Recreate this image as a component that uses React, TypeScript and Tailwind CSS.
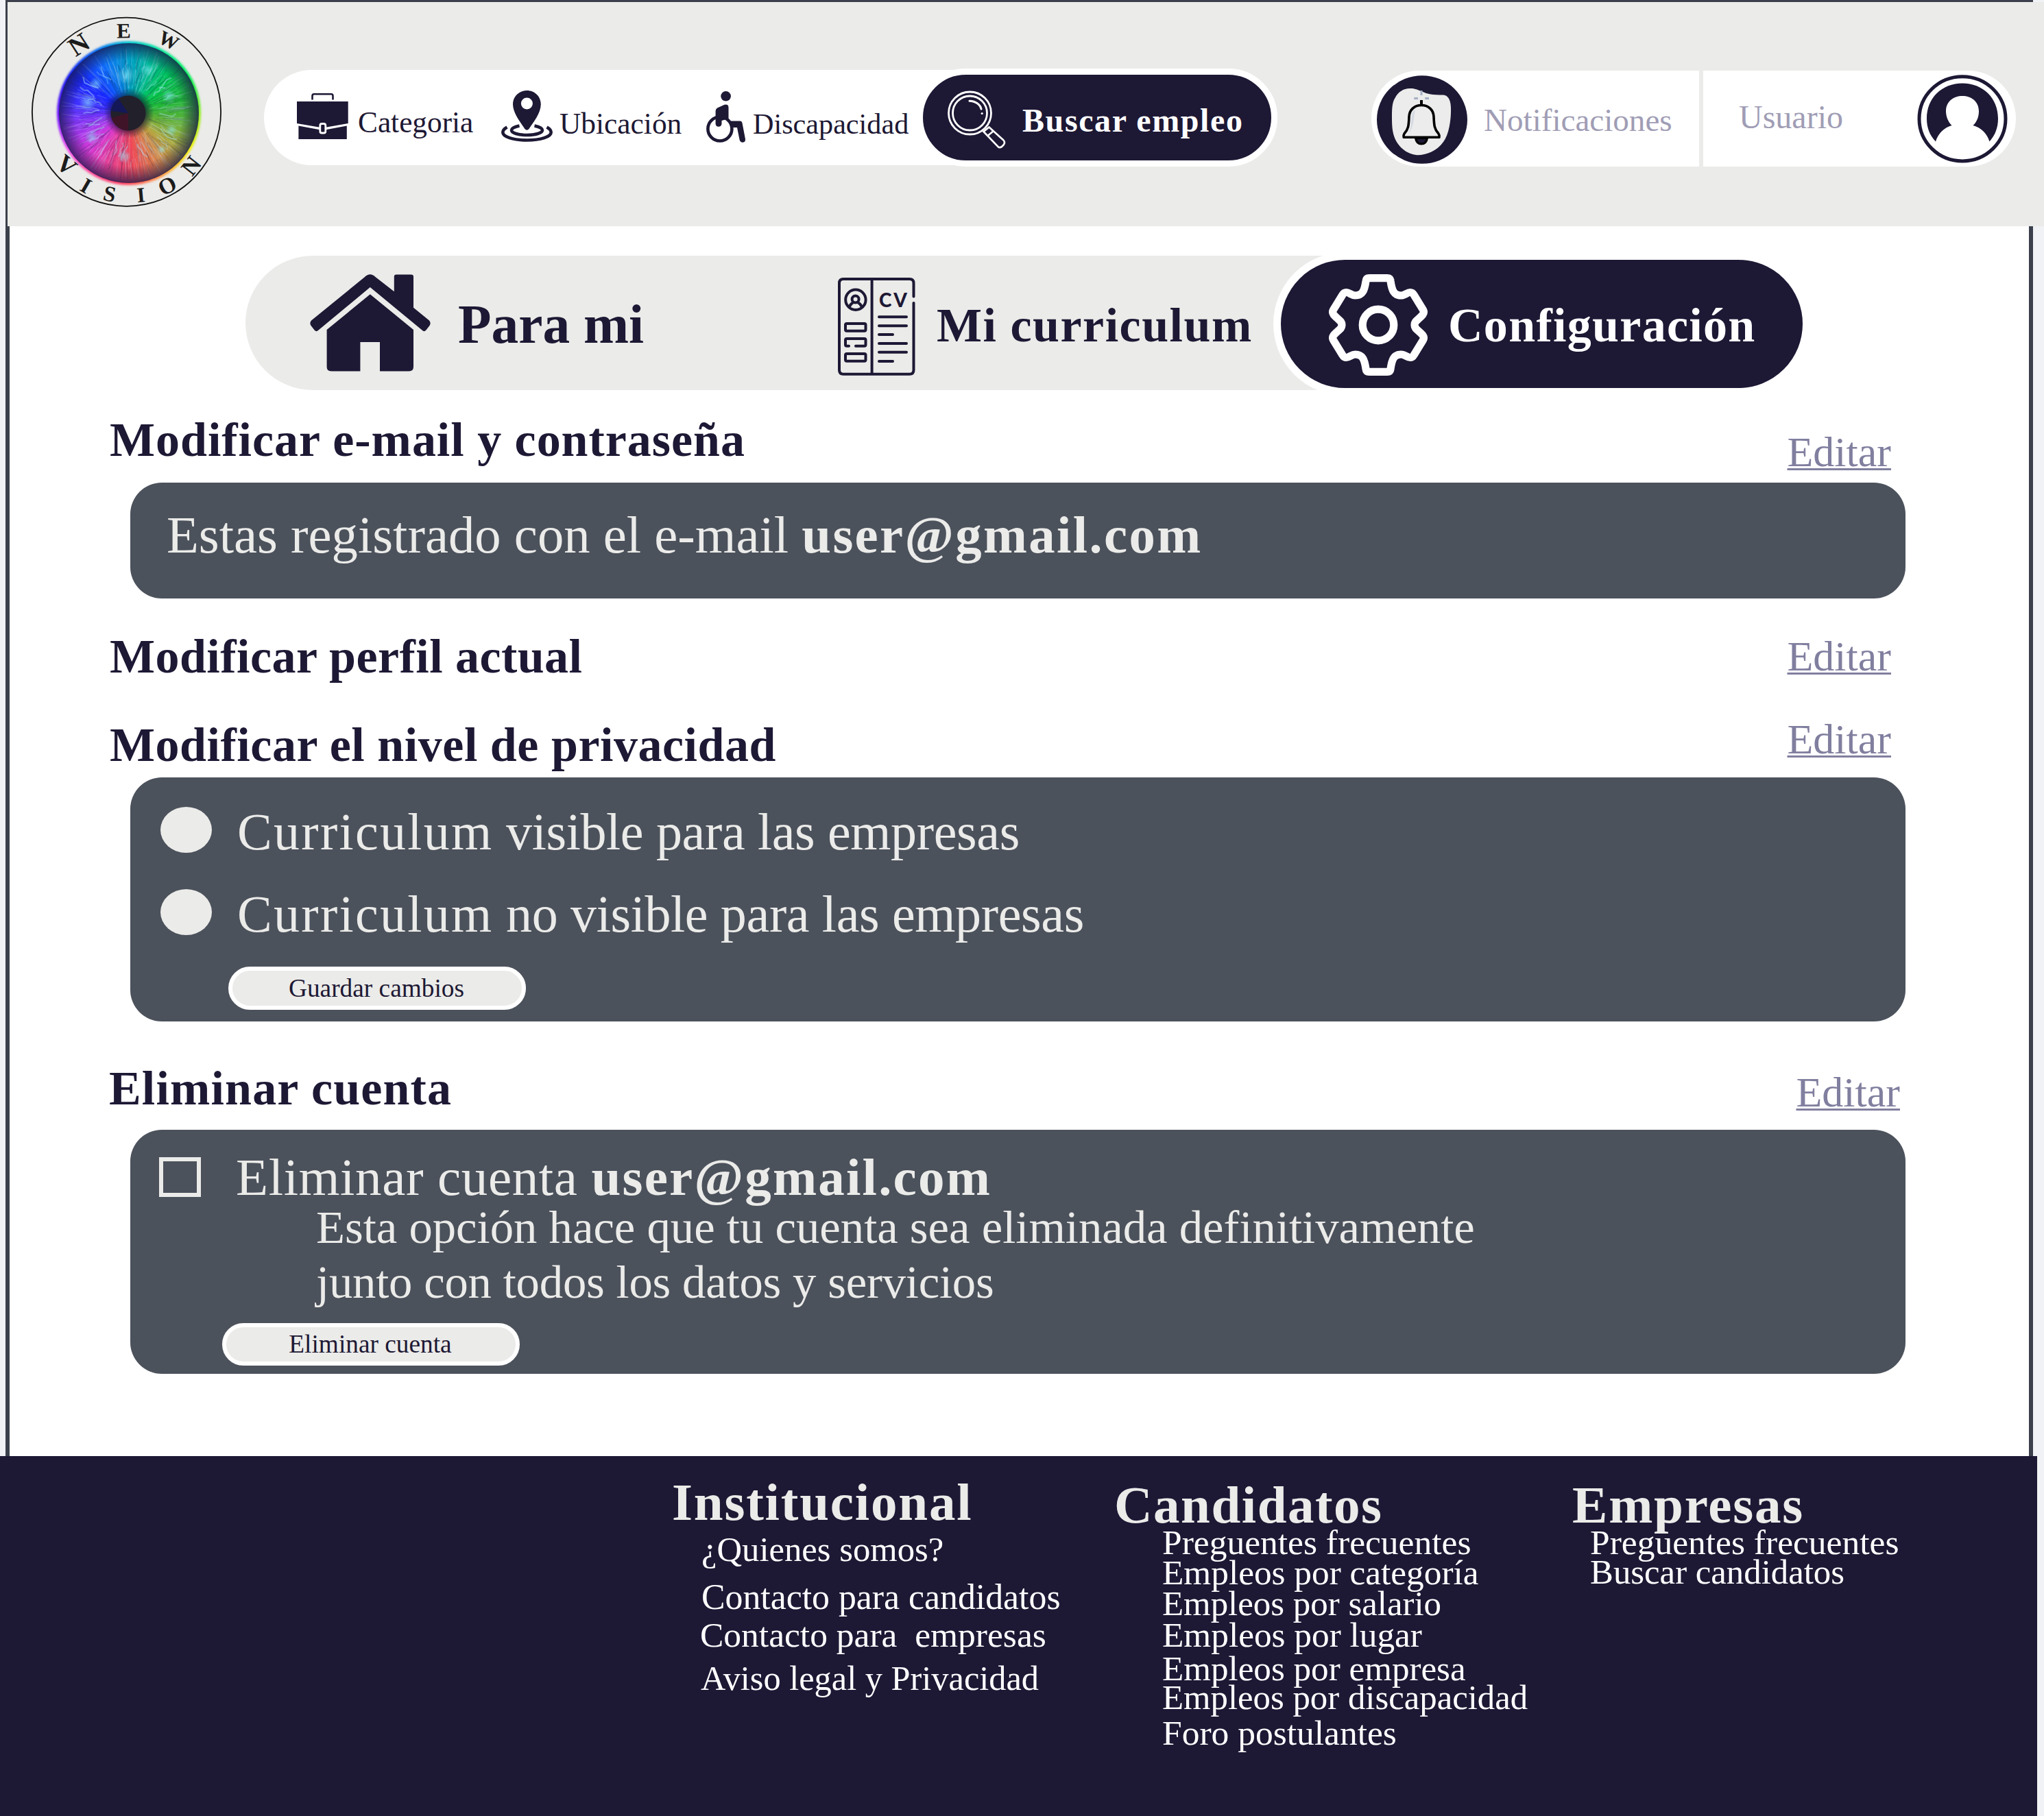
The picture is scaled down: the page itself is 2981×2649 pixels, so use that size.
import React from "react";

const NAVY = "#1d1834";

function rand(i: number) {
  const v = Math.sin(i * 127.1 + 11.7) * 43758.5453;
  return v - Math.floor(v);
}

/* Fine radial fibres of the iris */
const fibres = Array.from({ length: 520 }, (_, i) => {
  const a = rand(i) * Math.PI * 2;
  const r1 = 28 + rand(i + 500) * 45;
  const r2 = Math.min(98, r1 + 8 + rand(i + 900) * 32);
  const b = a + (rand(i + 1300) - 0.5) * 0.12;
  return {
    d: `M${188 + Math.cos(a) * r1} ${165 + Math.sin(a) * r1}L${188 + Math.cos(b) * r2} ${165 + Math.sin(b) * r2}`,
    light: rand(i + 1700) > 0.45,
    o: 0.06 + rand(i + 2100) * 0.16,
  };
});

/* Soft forked flares around the pupil */
const flares = Array.from({ length: 30 }, (_, i) => {
  const base = (i / 30) * Math.PI * 2 + rand(i + 3) * 0.15;
  let a = base;
  let r = 38 + rand(i + 31) * 20;
  let d = `M${188 + Math.cos(a) * r} ${165 + Math.sin(a) * r}`;
  for (let k = 0; k < 4; k++) {
    a += (rand(i * 7 + k) - 0.5) * 0.14;
    r += 4 + rand(i * 5 + k) * 4;
    d += `L${188 + Math.cos(a) * r} ${165 + Math.sin(a) * r}`;
  }
  return d;
});

/* Brightest spots of the iris: x, y, radius */
const glints: [number, number, number][] = [
  [184, 110, 13],
  [216, 102, 9],
  [246, 140, 10],
  [128, 150, 13],
  [140, 122, 10],
  [134, 200, 11],
  [181, 228, 10],
  [236, 218, 7],
  [250, 190, 9],
];

const logoLetters: [string, number, number, number, number][] = [
  ["N", 115, 65, -33, 39],
  ["E", 180.5, 45, -1, 31],
  ["W", 246, 59, 27, 29],
  ["V", 97, 241, 40, 36],
  ["I", 125.5, 271, 30, 32],
  ["S", 160, 283, 12, 32],
  ["I", 205.5, 284.5, -5, 31],
  ["O", 244, 271, -27, 33],
  ["N", 279, 242, -52, 34],
];

function Logo() {
  return (
    <div className="relative ml-[33px] mt-[19px] h-[282px] w-[282px] shrink-0">
      <div className="absolute left-[39px] top-[38px] h-[210px] w-[210px] rounded-full blur-[1.5px] bg-[conic-gradient(#00c8d0,#00e890_30deg,#00f050_60deg,#90f020_90deg,#f0f000_120deg,#ffa040_150deg,#ff4060_185deg,#ff50a0_215deg,#f050f0_240deg,#7010ff_268deg,#1010f0_300deg,#0070f0_335deg,#00c8d0)]" />
      <div className="absolute left-[42px] top-[41px] h-[204px] w-[204px] rounded-full bg-[conic-gradient(#00a0c8,#00b890_25deg,#00c850_50deg,#20b838_75deg,#60b038_100deg,#a8b040_122deg,#d88848_148deg,#f04858_176deg,#e84098_203deg,#d838d8_228deg,#9038f8_258deg,#4030ff_280deg,#1828ff_305deg,#1068ff_330deg,#00a0c8)]" />
      <svg className="absolute inset-0" width="282" height="282" viewBox="44 22 282 282">
        <defs>
          <radialGradient id="iris-shade" cx="188" cy="165" r="102" gradientUnits="userSpaceOnUse">
            <stop offset="0" stopColor="#101030" stopOpacity="0.8" />
            <stop offset="0.25" stopColor="#101030" stopOpacity="0.6" />
            <stop offset="0.36" stopColor="#101030" stopOpacity="0" />
            <stop offset="0.76" stopColor="#181848" stopOpacity="0" />
            <stop offset="0.94" stopColor="#181848" stopOpacity="0.55" />
            <stop offset="1" stopColor="#181848" stopOpacity="0.75" />
          </radialGradient>
          <radialGradient id="glint">
            <stop offset="0" stopColor="#90f0ff" stopOpacity="0.55" />
            <stop offset="1" stopColor="#90f0ff" stopOpacity="0" />
          </radialGradient>
        </defs>
        {fibres.map((f, i) => (
          <path key={i} d={f.d} stroke={f.light ? "#d0e8ff" : "#102050"} strokeOpacity={f.o} strokeWidth="1.3" fill="none" />
        ))}
        {glints.map(([x, y, r], i) => (
          <circle key={i} cx={x} cy={y} r={r} fill="url(#glint)" />
        ))}
        <g className="blur-[0.7px]">
          {flares.map((d, i) => (
            <path key={i} d={d} stroke="#b0e8ff" strokeOpacity={0.15 + rand(i + 77) * 0.3} strokeWidth="2" fill="none" />
          ))}
        </g>
        <circle cx="188" cy="165" r="102" fill="url(#iris-shade)" />
        <circle cx="187" cy="165" r="25.5" fill="#22202a" />
        <path d="M187 165L162 162A25 25 0 0 1 173 144Z" fill="#141858" />
        <path d="M187 165V190A25 25 0 0 1 163 172Z" fill="#401428" />
        <circle cx="184.5" cy="163.2" r="137.6" fill="none" stroke="#111" strokeWidth="1.8" />
        {logoLetters.map(([c, x, y, r, s], i) => (
          <text
            key={i}
            transform={`translate(${x} ${y}) rotate(${r})`}
            y={s * 0.33}
            textAnchor="middle"
            fontSize={s}
            fill="#1b1b1b"
            className="font-['Liberation_Serif',serif] font-bold"
          >
            {c}
          </text>
        ))}
      </svg>
    </div>
  );
}

function BriefcaseIcon() {
  return (
    <svg className="ml-12 mt-[34px] shrink-0" width="75" height="67" viewBox="0 0 75 67" fill={NAVY}>
      <path d="M22.5 9.5V4Q22.5 1.3 25 1.3H50Q52.5 1.3 52.5 4V9.5" fill="none" stroke={NAVY} strokeWidth="2.6" />
      <path d="M0 12H74.7V44L43.5 49.5H32L0 44Z" />
      <path d="M2.4 47.5L32 53H43.5L72.8 47.5V67H2.4Z" />
      <rect x="33.8" y="44.5" width="8" height="13.5" rx="2.5" stroke="#fff" strokeWidth="2.8" />
    </svg>
  );
}

function PinIcon() {
  return (
    <svg className="mt-[30px] shrink-0" width="75" height="75" viewBox="0 0 75 75">
      <path
        fillRule="evenodd"
        fill={NAVY}
        d="M37.4 0C48.5 0 57.8 8.5 57.8 20C57.8 33 47 46 40.5 56Q37.4 59.5 34.3 56C28 46 17 33 17 20C17 8.5 26.3 0 37.4 0ZM37.4 10.6A8.5 8.5 0 1 0 37.4 27.6A8.5 8.5 0 1 0 37.4 10.6Z"
      />
      <g fill="none" stroke={NAVY} strokeWidth="4.6">
        <path d="M26.5 51.5C19 53 15 55.5 15 58C15 62 25 65 37.4 65S60 62 60 58C60 55.5 56 53 48.5 51.5" />
        <path d="M8.5 53.5C4 56 2.3 58.5 2.3 61C2.3 67.5 17 72.5 37.4 72.5S72.700 67.500 72.700 61C72.700 58.500 71 56 66.500 53.500" />
      </g>
    </svg>
  );
}

function WheelchairIcon() {
  return (
    <svg className="mt-[31px] shrink-0" width="58" height="75" viewBox="0 0 58 75">
      <circle cx="28.6" cy="7.3" r="7.3" fill={NAVY} />
      <circle cx="19.9" cy="55" r="17.5" fill="none" stroke={NAVY} strokeWidth="4.6" />
      <path d="M13.6 29Q13.6 26 16 24.5L26.5 19.8Q32.5 18.5 32.5 24V40L22.5 43V47Q22.5 51.7 18 51.7T13.6 47Z" fill={NAVY} />
      <path d="M35 43.5H49Q52 43.5 52.5 46.5L57 70Q57.2 74.5 53.3 74.7Q49.5 74.7 48.6 71L45 53H38Z" fill={NAVY} />
    </svg>
  );
}

function MagnifierIcon() {
  return (
    <svg className="ml-9 mt-[23px] shrink-0" width="85" height="85" viewBox="0 0 85 85" fill="none" stroke="#fff">
      <circle cx="32.5" cy="33" r="31" strokeWidth="2.8" />
      <circle cx="32.5" cy="33" r="25" strokeWidth="2.8" />
      <path d="M32 15.2C41 15.5 47.5 20.5 49 27" strokeWidth="3" strokeLinecap="round" />
      <circle cx="50.2" cy="33.5" r="1.6" fill="#fff" stroke="none" />
      <path d="M52.5 60L60.5 53.5L81.5 72.5Q84.5 76 81.5 79.5L79.5 81.5Q77 84 74 82.5Z" strokeWidth="2.6" />
      <path d="M58.5 66L67 59" strokeWidth="2.6" />
    </svg>
  );
}

function BellIcon() {
  return (
    <svg className="ml-2 mt-[7px] shrink-0" width="132" height="129" viewBox="0 0 132 129">
      <ellipse cx="66" cy="64.5" rx="66" ry="64.3" fill={NAVY} />
      <path
        d="M47.8 19C56 18.5 60 21.5 66 23.5C74 27.5 81 28.5 97 28.5C104 29 107.700 36 108 47C108.500 62 106 85 97 97C88 110 72 116.500 58.700 116.300C46 115 36 108 29.700 98.300C23 88 22 76 22 63C22 50 22 40 26.500 33C31 24 39 19 47.800 19Z"
        fill="#ebeceb"
      />
      <path d="M65 22V29M54.3 33.5H60M70.3 33.5H76" stroke="#a5b0c5" strokeWidth="3" />
      <path d="M65 36V44" stroke="#000" strokeWidth="4" />
      <path
        d="M65 43.5C54 43.5 47.5 51 47 60C46.5 72 46.5 78 40 85Q38.5 87 39.2 90.3H91Q91.5 87 90 85C83.5 78 83.5 72 83 60C82.5 51 76 43.5 65 43.5Z"
        fill="#ebeceb"
        stroke="#000"
        strokeWidth="3.6"
        strokeLinejoin="round"
      />
      <path d="M50.5 62C51 56 52 53 56 49.5C53.5 60 55 74 46.5 84.5C50 76 50 70 50.5 62Z" fill="#d5dae3" />
      <path d="M56.5 91.5Q58 100 65 100T73.5 91.5Z" fill={NAVY} stroke="#000" strokeWidth="3.2" />
    </svg>
  );
}

function UserIcon() {
  return (
    <svg className="mt-[6px] shrink-0" width="132" height="129" viewBox="0 0 132 129">
      <ellipse cx="66" cy="64.3" rx="63" ry="61.6" fill="#fff" stroke={NAVY} strokeWidth="5" />
      <path d="M27 97.5C18 88 14 77 14 64C14 34 36 12.5 66 12.5S118 34 118 64C118 77 114 88 105.5 97.5C102 86 94 77.5 81.5 74C88 68 90 60 90 53C90 39 79 31 66 31S42 39 42 53C42 60 44.500 68 50.500 74C38.500 77.500 30.500 86 27 97.500Z" fill={NAVY} />
    </svg>
  );
}

function HomeIcon() {
  return (
    <svg className="ml-[94px] mt-[27px] shrink-0" width="176" height="142" viewBox="0 0 176 142" fill={NAVY}>
      <path d="M80 4Q87.8 -3.5 95.5 4L122.8 25.3V3.5Q122.8 .5 126 .5H147.5Q151 .5 151 3.5V48.7L174 67.5Q177 71 174.5 75L169 82Q166.5 84.5 163.5 81.5L87.8 19L12.5 81.5Q9.500 84.500 7 82L1.500 75Q-1 71 2 67.500Z" />
      <path d="M87.8 29.3L151 81V135Q151 141.5 144.5 141.5H102V99H73.4V141.5H31Q24.6 141.5 24.6 135V81Z" />
    </svg>
  );
}

function CvIcon() {
  return (
    <svg className="mt-8 shrink-0" width="113" height="143" viewBox="0 0 113 143" fill="none" stroke={NAVY} strokeWidth="4" strokeLinecap="round">
      <path d="M110.5 27.5V8Q110.5 2 104.5 2H8Q2 2 2 8V134.7Q2 140.7 8 140.7H104.5Q110.500 140.700 110.500 134.700V37" />
      <path d="M49.6 2V140" />
      <circle cx="25.9" cy="32.3" r="14.7" />
      <circle cx="25.6" cy="31.5" r="5" />
      <path d="M16.5 43C18 39 20 37.5 22 36.5M35 43C33.5 39 31.5 37.5 29.5 36.5" />
      <rect x="11" y="67" width="29.5" height="10.8" rx="2" />
      <path d="M16 99.7H13Q11 99.7 11 97.7V91Q11 89 13 89H38.5Q40.5 89 40.5 91V97.7Q40.5 99.7 38.5 99.7H26" />
      <rect x="11" y="111" width="29.5" height="10.8" rx="2" />
      <path d="M60 57.3H100M60 70.3H100M60 83H80M60 96H100M60 108.7H100M60 122H80" />
      <text x="60" y="43" fontSize="28" textLength="41" lengthAdjust="spacing" fill={NAVY} stroke="none" className="font-['Lato',sans-serif] font-black">
        CV
      </text>
    </svg>
  );
}

function GearIcon() {
  return (
    <svg className="ml-[70px] mt-[21px] shrink-0" width="144" height="148" viewBox="0 0 144 148" fill="none" stroke="#fff" strokeWidth="11.2" strokeLinejoin="round">
      <path d="M59 5.6H85Q89.5 5.6 90 10C92 24 95 31 105.5 31C111 31 114 26.5 118.5 26.5Q122 26.5 124 30L137.5 52Q139.5 55.5 137 59C130 67 125 68 125 74C125 80 130 81 137 89Q139.500 92.500 137.500 96L124 118Q122 121.500 118.500 121.500C114 121.500 111 117 105.500 117C95 117 92 124 90 138Q89.500 142.400 85 142.400H59Q54.500 142.400 54 138C52 124 49 117 38.500 117C33 117 30 121.500 25.500 121.500Q22 121.500 20 118L6.500 96Q4.500 92.500 7 89C14 81 19 80 19 74C19 68 14 67 7 59Q4.500 55.500 6.500 52L20 30Q22 26.500 25.500 26.500C30 26.500 33 31 38.500 31C49 31 52 24 54 10Q54.500 5.600 59 5.600Z" />
      <circle cx="72" cy="74" r="22.8" />
    </svg>
  );
}

function Header() {
  return (
    <header className="-ml-[3px] flex h-[327px] w-[2970px] items-start bg-[#ebebe9]">
      <Logo />
      <nav className="ml-[59px] mt-[99px] flex h-[139px] w-[1478px] shrink-0 items-start rounded-full bg-white text-[42px] leading-none">
        <BriefcaseIcon />
        <a className="ml-[14px] mt-[55px] w-[209px] text-[43.3px] leading-none">Categoria</a>
        <PinIcon />
        <a className="ml-[10px] mt-[57px] w-[214px] text-[43.4px] leading-none">Ubicación</a>
        <WheelchairIcon />
        <a className="ml-[10px] mt-[58px] w-[239px] text-[42.2px] leading-none">Discapacidad</a>
        <button className="-mt-[2px] flex h-[143px] w-[526px] shrink-0 items-start rounded-full border-[9px] border-white bg-[#1d1834] text-white">
          <MagnifierIcon />
          <span className="ml-[24px] mt-[43px] whitespace-nowrap text-[48px] font-bold leading-none tracking-[1.6px]">Buscar empleo</span>
        </button>
      </nav>
      <div className="ml-[137px] mt-[100px] flex h-[140px] w-[940px] shrink-0 items-start rounded-full bg-white leading-none text-[#a09db5]">
        <BellIcon />
        <span className="ml-[24px] mt-[49px] w-[314px] text-[47.1px] leading-none">Notificaciones</span>
        <div className="h-full w-[6px] bg-[#ebebe9]" />
        <span className="ml-[52px] mt-[44px] w-[260px] text-[48px] leading-none">Usuario</span>
        <UserIcon />
      </div>
    </header>
  );
}

function Tabs() {
  return (
    <div className="ml-[344px] mt-[38px] flex h-[209px] items-start font-bold">
      <div className="mt-[5px] flex h-[196px] w-[1640px] shrink-0 items-start rounded-l-[98px] bg-[#ebebe9]">
        <HomeIcon />
        <span className="ml-[40px] mt-[61px] w-[554px] text-[79.4px] leading-none">Para mi</span>
        <CvIcon />
        <span className="ml-[31px] mt-[67px] whitespace-nowrap text-[70px] leading-none tracking-[1.5px]">Mi curriculum</span>
      </div>
      <div className="-ml-[141px] flex h-[209px] w-[783px] shrink-0 items-start rounded-full border-[11px] border-white bg-[#1d1834] text-white">
        <GearIcon />
        <span className="ml-[30px] mt-[61px] text-[70px] leading-none tracking-[1.3px]">Configuración</span>
      </div>
    </div>
  );
}

function SectionHead(props: { title: string; row: string; head: string; edit: string }) {
  return (
    <div className={`flex items-start pl-[146px] ${props.row}`}>
      <h2 className={`whitespace-nowrap text-[70px] font-bold leading-none ${props.head}`}>{props.title}</h2>
      <a className={`ml-auto text-[62px] leading-none text-[#817f9f] underline decoration-[3px] underline-offset-[3px] ${props.edit}`}>Editar</a>
    </div>
  );
}

const panel = "ml-[176px] w-[2589px] rounded-[46px] bg-[#4c525c] text-[#ebebe9]";
const pill =
  "flex w-[434px] items-center justify-center rounded-full border-[6px] border-white bg-[#ebebe9] pr-[2px] text-[37.33px] leading-none text-[#1d1834]";

function Option(props: { label: string }) {
  return (
    <label className="flex h-[120px] items-start">
      <span className="ml-[44px] mt-[3px] h-[67px] w-[75px] rounded-[50%] bg-[#ebebe9]" />
      <span className="ml-[37px] mt-[1px] whitespace-nowrap text-[76px] leading-[77px] tracking-[-0.35px]">
        <span className="tracking-[2.3px]">Curriculum</span> {props.label}
      </span>
    </label>
  );
}

function Footer() {
  return (
    <footer className="flex h-[525px] w-[2971px] items-start bg-[#1d1834] pl-[980px] text-[51px] leading-[43px] text-white">
      <div className="w-[645px] shrink-0 whitespace-pre">
        <h3 className="mt-[29px] text-[77px] font-bold leading-none tracking-[1.8px] text-[#ebebe9]">Institucional</h3>
        <ul className="mt-[9px] pl-[43px]">
          <li className="text-[50.7px]">¿Quienes somos?</li>
          <li className="mt-[26px] text-[51.8px]">Contacto para candidatos</li>
          <li className="mt-[12px] -ml-[2px] text-[51.5px]">Contacto para  empresas</li>
          <li className="mt-[21px] -ml-[1px] text-[50.4px]">Aviso legal y Privacidad</li>
        </ul>
      </div>
      <div className="w-[668px] shrink-0 whitespace-nowrap">
        <h3 className="mt-[33px] text-[77px] font-bold leading-none tracking-[1.5px] text-[#ebebe9]">Candidatos</h3>
        <ul className="-mt-[6px] pl-[70px] text-[51.3px]">
          <li className="text-[51.5px]">Preguentes frecuentes</li>
          <li className="mt-[1px]">Empleos por categoría</li>
          <li className="mt-[3px] text-[50.9px]">Empleos por salario</li>
          <li className="mt-[2px]">Empleos por lugar</li>
          <li className="mt-[6px] text-[51.1px]">Empleos por empresa</li>
          <li className="text-[50.8px]">Empleos por discapacidad</li>
          <li className="mt-[8px] text-[51.5px]">Foro postulantes</li>
        </ul>
      </div>
      <div className="whitespace-nowrap">
        <h3 className="mt-[33px] text-[77px] font-bold leading-none tracking-[1.8px] text-[#ebebe9]">Empresas</h3>
        <ul className="-mt-[6px] pl-[26px] text-[51.5px]">
          <li>Preguentes frecuentes</li>
          <li className="mt-[1px] text-[50.8px]">Buscar candidatos</li>
        </ul>
      </div>
    </footer>
  );
}

export default function App() {
  return (
    <div className="h-[2649px] w-[2981px] overflow-hidden bg-[#f0f2f5] font-['Liberation_Serif',serif] text-[#1d1834]">
      <div className="ml-2 h-[2124px] w-[2957px] border-x-[6px] border-t-[3px] border-[#3b404c] bg-white">
        <Header />
        <main className="flex flex-col">
          <Tabs />
          <SectionHead title="Modificar e-mail y contraseña" row="h-[127px] pr-[201px]" head="mt-[30px] tracking-[0.97px]" edit="mt-[51px]" />
          <div className={`h-[169px] pl-[53px] pt-[39px] text-[76.7px] leading-none ${panel}`}>
            Estas registrado con el e-mail <b className="tracking-[2.4px]">user@gmail.com</b>
          </div>
          <SectionHead title="Modificar perfil actual" row="h-[157px] pr-[201px]" head="mt-[50px] tracking-[0.45px]" edit="mt-[53px]" />
          <SectionHead title="Modificar el nivel de privacidad" row="h-[104px] pr-[201px]" head="mt-[22px] tracking-[0.52px]" edit="mt-[17px]" />
          <div className={`h-[356px] pt-[40px] ${panel}`}>
            <Option label="visible para las empresas" />
            <Option label="no visible para las empresas" />
            <button className={`-mt-[4px] ml-[143px] h-[63px] ${pill}`}>Guardar cambios</button>
          </div>
          <SectionHead title="Eliminar cuenta" row="h-[158px] pr-[188px]" head="-ml-[1px] mt-[63px] tracking-[1.15px]" edit="mt-[72px]" />
          <div className={`h-[356px] pt-[30px] ${panel}`}>
            <label className="flex h-[73px] items-start">
              <span className="ml-[42px] mt-[10px] h-[58px] w-[61px] border-[6px] border-[#ebebe9]" />
              <span className="ml-[51px] mt-[1px] text-[77px] leading-none tracking-[0.6px]">
                Eliminar cuenta <b className="tracking-[2.2px]">user@gmail.com</b>
              </span>
            </label>
            <p className="ml-[271px] text-[68.7px] leading-[79.5px]">
              Esta opción hace que tu cuenta sea eliminada definitivamente
              <br />
              <span className="tracking-[-0.2px]">junto con todos los datos y servicios</span>
            </p>
            <button className={`ml-[134px] mt-[20px] h-[62px] ${pill}`}>Eliminar cuenta</button>
          </div>
        </main>
      </div>
      <Footer />
    </div>
  );
}
